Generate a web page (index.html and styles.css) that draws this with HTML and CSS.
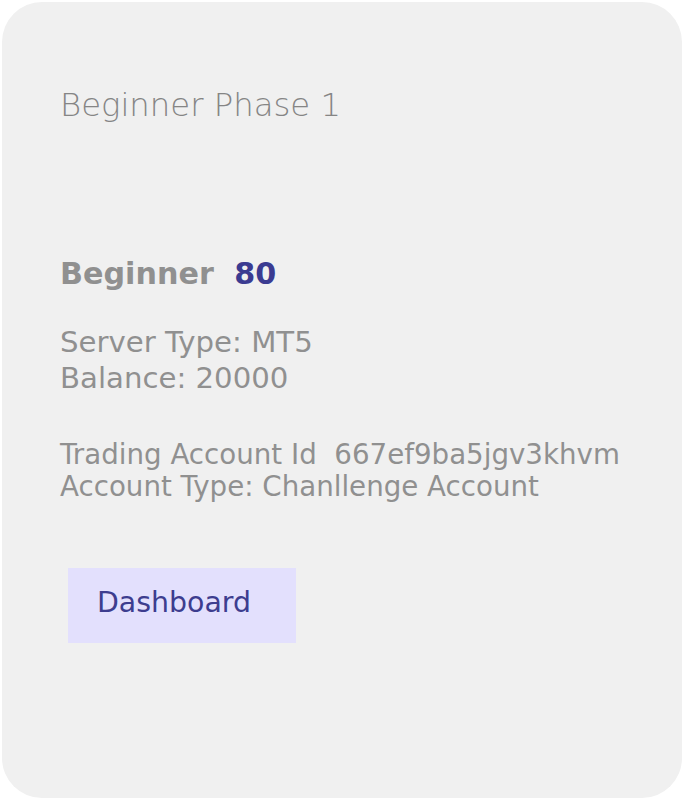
FILE: index.html
```html
<!DOCTYPE html>
<html lang="en">
<head>
<meta charset="utf-8">
<title>Beginner Phase 1</title>
<link rel="stylesheet" href="styles.css">
</head>
<body>
<div class="card">
  <h2 class="title">Beginner Phase 1</h2>
  <div class="name">Beginner <span class="score">80</span></div>
  <div class="server">
    <div>Server Type: MT5</div>
    <div>Balance: 20000</div>
  </div>
  <div class="account">
    <div>Trading Account Id&nbsp; 667ef9ba5jgv3khvm</div>
    <div>Account Type: Chanllenge Account</div>
  </div>
  <button class="btn">Dashboard</button>
</div>
</body>
</html>
```
FILE: styles.css
```css
html, body {
  margin: 0;
  padding: 0;
  background: #ffffff;
}
body {
  padding: 2px 1px 2px 2px;
  font-family: "DejaVu Sans", "Open Sans", sans-serif;
  color: #909090;
}
.card {
  height: 796px;
  box-sizing: border-box;
  background: #f0f0f0;
  border-radius: 40px;
  padding: 83px 0 0 58px;
  display: flex;
  flex-direction: column;
  align-items: flex-start;
}
.title {
  margin: 0;
  font-family: "DejaVu Sans ExtraLight", "DejaVu Sans", sans-serif;
  font-size: 32.3px;
  font-weight: 200;
  line-height: 40px;
  color: #858585;
}
.name {
  margin-top: 129px;
  font-size: 30.2px;
  font-weight: 700;
  line-height: 40px;
}
.score {
  color: #3b3b91;
  margin-left: 10px;
}
.server {
  margin-top: 30px;
  font-size: 29.2px;
  font-weight: 400;
  line-height: 36px;
}
.account {
  margin-top: 43px;
  font-size: 27.7px;
  font-weight: 400;
  line-height: 32px;
}
.btn {
  margin: 65px 0 0 8px;
  width: 228px;
  height: 75px;
  border: none;
  background: #e3e0fd;
  color: #3d3d8f;
  font-family: inherit;
  font-size: 28.4px;
  font-weight: 400;
  text-align: left;
  padding: 0 0 6px 29px;
}
```
